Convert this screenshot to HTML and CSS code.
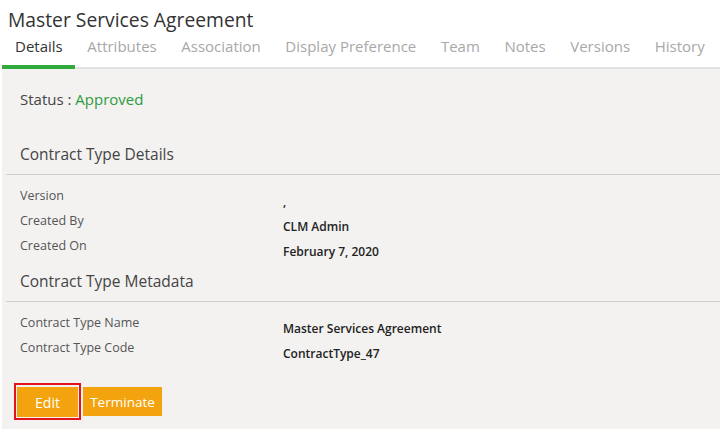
FILE: index.html
```html
<!DOCTYPE html>
<html lang="en">
<head>
    <meta charset="UTF-8">
    <meta name="viewport" content="width=device-width, initial-scale=1.0">
    <title>Master Services Agreement</title>
    <link rel="stylesheet" href="styles.css">
</head>
<body>
    <div class="page">
        <h1 class="title">Master Services Agreement</h1>
        <div class="tabs">
            <span class="tab active">Details</span>
            <span class="tab">Attributes</span>
            <span class="tab">Association</span>
            <span class="tab">Display Preference</span>
            <span class="tab">Team</span>
            <span class="tab">Notes</span>
            <span class="tab">Versions</span>
            <span class="tab">History</span>
        </div>
        <div class="panel">
            <div class="status">Status : <span class="approved">Approved</span></div>

            <h2 class="section-title">Contract Type Details</h2>
            <div class="fields">
                <div class="field">
                    <span class="label">Version</span>
                    <span class="value">,</span>
                </div>
                <div class="field">
                    <span class="label">Created By</span>
                    <span class="value">CLM Admin</span>
                </div>
                <div class="field">
                    <span class="label">Created On</span>
                    <span class="value">February 7, 2020</span>
                </div>
            </div>

            <h2 class="section-title">Contract Type Metadata</h2>
            <div class="fields">
                <div class="field">
                    <span class="label">Contract Type Name</span>
                    <span class="value">Master Services Agreement</span>
                </div>
                <div class="field">
                    <span class="label">Contract Type Code</span>
                    <span class="value">ContractType_47</span>
                </div>
            </div>

            <div class="actions">
                <span class="highlight"><button type="button" class="btn btn-edit">Edit</button></span>
                <button type="button" class="btn btn-terminate">Terminate</button>
            </div>
        </div>
    </div>
</body>
</html>
```

FILE: styles.css
```css
body {
    margin: 0;
    font-family: "Open Sans", "Noto Sans", sans-serif;
    background: #ffffff;
    color: #333;
}
.page {
    padding-left: 2px;
    height: 429px;
    display: flex;
    flex-direction: column;
}
.title {
    margin: 0;
    padding: 7px 0 0 6px;
    font-size: 19.3px;
    font-weight: 400;
    line-height: 26px;
    color: #333;
}
.tabs {
    display: flex;
    border-bottom: 2px solid #e2e2e2;
    height: 36px;
    box-sizing: border-box;
}
.tab {
    padding: 2px 12.3px 0 12.3px;
    font-size: 15px;
    line-height: 22px;
    color: #a8a8a8;
    white-space: nowrap;
}
.tab:first-child {
    padding-left: 13px;
}
.tab.active {
    color: #333;
    border-bottom: 4px solid #2eab3c;
    margin-bottom: -2px;
}
.panel {
    flex: 1;
    background: #f3f2f1;
    padding: 19px 0 0 4px;
}
.status {
    padding-left: 14px;
    font-size: 15px;
    line-height: 22px;
    color: #444;
}
.approved {
    color: #2e9a3e;
}
.section-title {
    margin: 0;
    padding: 0 0 9px 14px;
    font-size: 15.5px;
    font-weight: 400;
    line-height: 22px;
    color: #444;
    border-bottom: 1px solid #cfcfcf;
}
.status + .section-title {
    margin-top: 33px;
}
.fields {
    padding: 13px 0 0 14px;
}
.fields + .section-title {
    margin-top: 7px;
}
.field {
    display: grid;
    grid-template-columns: 263px 1fr;
    height: 25px;
}
.label {
    color: #555;
    font-size: 12.5px;
    line-height: 16px;
}
.value {
    color: #222;
    font-size: 12px;
    line-height: 16px;
    padding-top: 6px;
    font-weight: 600;
}
.actions {
    display: flex;
    align-items: center;
    gap: 2px;
    padding: 18px 0 0 8px;
}
.highlight {
    border: 2px solid #e3131b;
    padding: 2px 1px 1px 1px;
    display: flex;
}
.btn {
    border: none;
    background: #f2a30d;
    color: #fff;
    font-family: "Open Sans", "Noto Sans", sans-serif;
    font-size: 14px;
    height: 30px;
    padding: 0;
}
.btn-edit {
    width: 61px;
}
.btn-terminate {
    width: 79px;
    height: 29px;
    font-size: 13.5px;
}
```
